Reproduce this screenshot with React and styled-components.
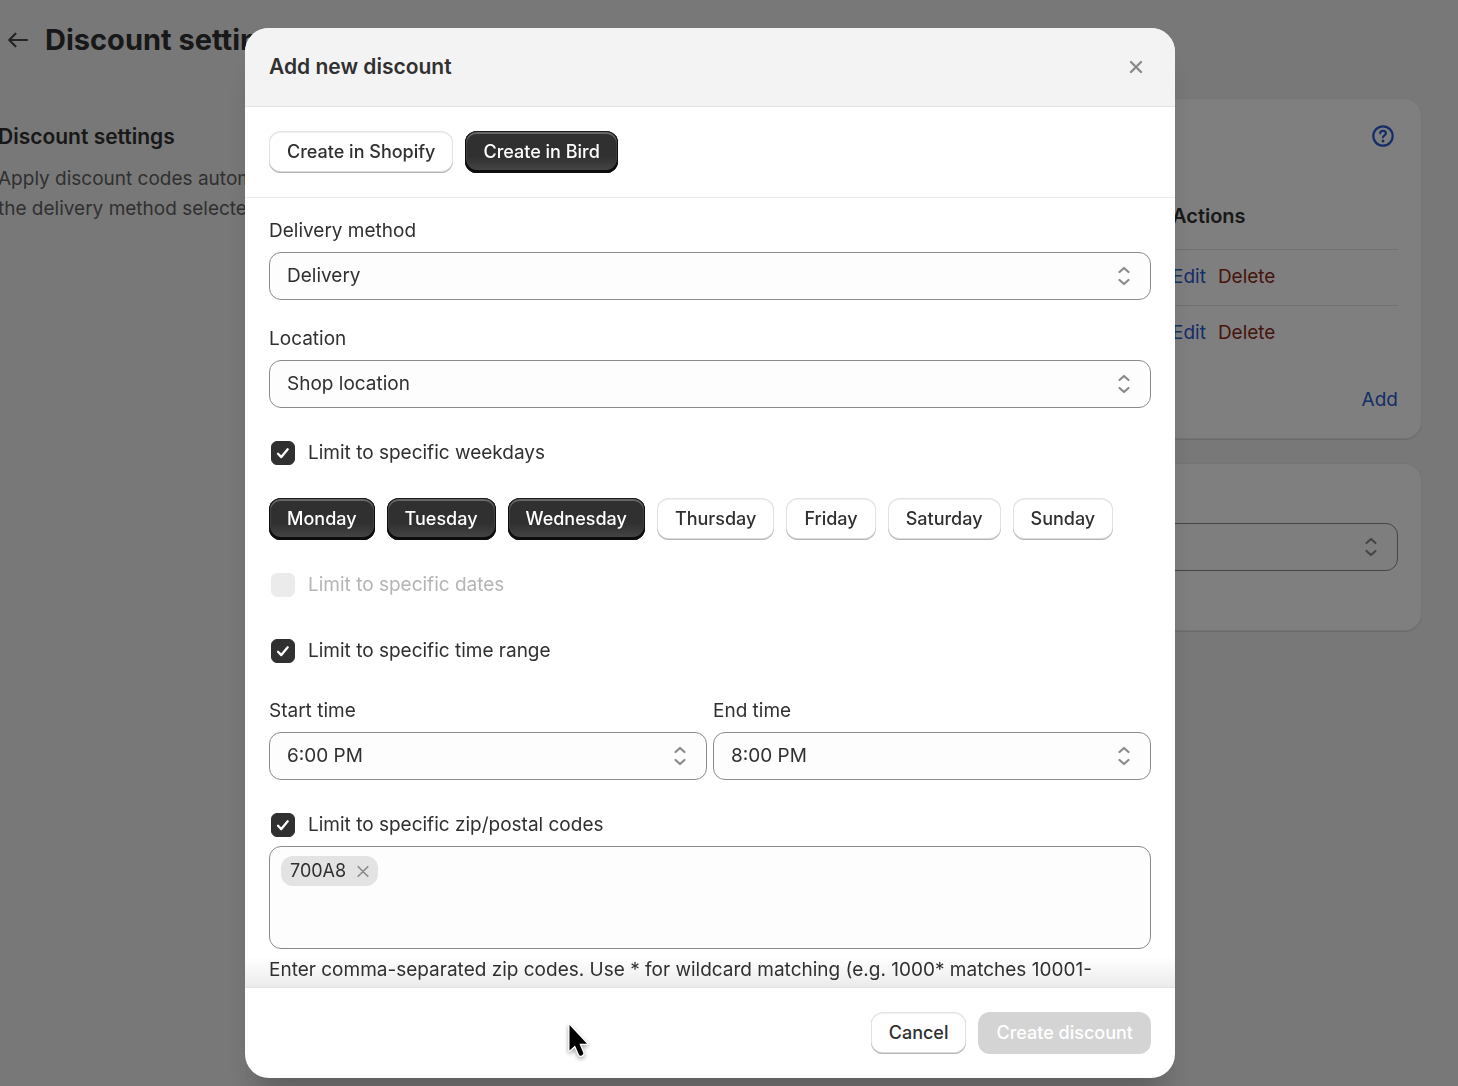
import React, { useState } from 'react';
import styled, { createGlobalStyle, css } from 'styled-components';

const GlobalStyle = createGlobalStyle`
  *,
  *::before,
  *::after {
    box-sizing: border-box;
  }

  body {
    margin: 0;
    background-color: #f1f1f1;
    color: #303030;
    font-family: Inter, 'Liberation Sans', sans-serif;
    font-size: 19px;
    line-height: 30px;
    overflow: hidden;
  }

  button,
  select,
  input {
    font: inherit;
    color: inherit;
  }
`;

/* Page behind the dialog */

const Page = styled.main`
  display: flex;
  flex-direction: column;
  gap: 34px;
  min-height: 100vh;
  margin-left: -2px;
  padding: 16px 36px 0 0;
`;

const PageHeader = styled.header`
  display: flex;
  align-items: center;
  gap: 12px;
  padding-left: 5px;
  height: 48px;
`;

const BackButton = styled.button`
  display: flex;
  padding: 0;
  border: 0;
  background: none;
`;

const PageTitle = styled.h1`
  margin: 0;
  font-size: 29px;
  line-height: 36px;
  font-weight: 700;
`;

const Columns = styled.div`
  display: grid;
  grid-template-columns: 1fr 2fr;
  gap: 24px;
`;

const Intro = styled.section`
  display: flex;
  flex-direction: column;
  gap: 12px;
  padding: 24px 36px 0 0;
`;

const IntroTitle = styled.h2`
  margin: 0;
  font-size: 21px;
  line-height: 30px;
  font-weight: 600;
`;

const IntroText = styled.p`
  margin: 0;
  color: #616161;
`;

const CardStack = styled.div`
  display: flex;
  flex-direction: column;
  gap: 24px;
`;

const Card = styled.section`
  display: flex;
  flex-direction: column;
  padding: ${({ $tall }) => ($tall ? '60px 24px' : '24px')};
  background-color: #fff;
  border-radius: 18px;
  box-shadow: 0 1px 1px rgba(26, 26, 26, 0.14), inset 0 0 0 1px rgba(0, 0, 0, 0.08);
`;

const CardTop = styled.div`
  display: flex;
  justify-content: flex-end;
  height: 61px;
`;

const HelpButton = styled.button`
  display: flex;
  align-self: flex-start;
  padding: 0;
  border: 0;
  background: none;
  color: #2a5cd0;
`;

const Table = styled.table`
  width: 100%;
  border-collapse: collapse;
  text-align: left;

  th {
    height: 66px;
    padding: 0;
    font-size: 20px;
    font-weight: 600;
  }

  td {
    height: 56px;
    padding: 0;
    border-top: 1px solid #e3e3e3;
  }

  th:last-child,
  td:last-child {
    width: 226px;
  }
`;

const ActionLinks = styled.div`
  display: flex;
  gap: 12px;
`;

const TextLink = styled.a`
  color: ${({ $critical }) => ($critical ? '#8e2a1a' : '#2a5cd0')};
  text-decoration: none;
`;

const CardFooter = styled.div`
  display: flex;
  justify-content: flex-end;
  padding-top: 24px;
`;

/* Dialog */

const Overlay = styled.div`
  position: fixed;
  inset: 0;
  display: flex;
  justify-content: center;
  align-items: flex-start;
  padding: 28px 38px 8px 0;
  background-color: rgba(0, 0, 0, 0.5);
`;

const Dialog = styled.div`
  display: flex;
  flex-direction: column;
  width: 100%;
  max-width: 930px;
  max-height: 100%;
  background-color: #fff;
  border-radius: 24px;
  box-shadow: 0 30px 30px -12px rgba(26, 26, 26, 0.28);
  overflow: hidden;
`;

const DialogHeader = styled.header`
  display: flex;
  flex: none;
  align-items: center;
  justify-content: space-between;
  padding: 24px;
  background-color: #f3f3f3;
  border-bottom: 1px solid #e3e3e3;
`;

const DialogTitle = styled.h2`
  margin: 0;
  font-size: 21px;
  line-height: 30px;
  font-weight: 600;
`;

const CloseButton = styled.button`
  display: flex;
  padding: 0;
  border: 0;
  background: none;
  color: #8a8a8a;
`;

const ModeBar = styled.div`
  display: flex;
  flex: none;
  gap: 12px;
  padding: 24px;
  border-bottom: 1px solid #ebebeb;
`;

const DialogBody = styled.form`
  display: flex;
  flex: 1;
  flex-direction: column;
  gap: 24px;
  min-height: 0;
  padding: 18px 24px;
  overflow-y: auto;
  scrollbar-width: none;
  background: linear-gradient(rgba(0, 0, 0, 0), rgba(0, 0, 0, 0.08)) bottom / 100% 30px no-repeat;

  & > * {
    flex-shrink: 0;
  }
`;

const DialogFooter = styled.footer`
  display: flex;
  flex: none;
  justify-content: flex-end;
  gap: 12px;
  padding: 24px;
  border-top: 1px solid #e3e3e3;
`;

const Button = styled.button`
  height: 42px;
  padding: 0 18px;
  border: 0;
  border-radius: 12px;
  background-color: #fff;
  font-size: 18px;
  line-height: 24px;
  font-weight: 500;
  white-space: nowrap;
  box-shadow: inset 0 -1px 0 #b5b5b5, inset 0 -2px 0 #dcdcdc, inset 0 0 0 1px #e3e3e3, inset 0 2px 0 #f0f0f0;

  ${({ $selected }) =>
    $selected &&
    css`
      background: linear-gradient(#303030 60%, #484848);
      color: #fff;
      box-shadow: inset 0 -2px 0 1px #0d0d0d, inset 0 0 0 1px #1a1a1a, inset 0 2px 0 1px #666,
        inset 0 0 0 2px #404040;
    `}

  &:disabled {
    background: #d4d4d4;
    color: #fff;
    box-shadow: none;
  }
`;

const Field = styled.div`
  display: flex;
  flex-direction: column;
  gap: 6px;
`;

const FieldRow = styled.div`
  display: grid;
  grid-template-columns: 1fr 1fr;
  gap: 6px;
`;

const SelectBox = styled.div`
  display: grid;
  align-items: center;

  & > * {
    grid-area: 1 / 1;
  }

  svg {
    justify-self: end;
    margin-right: 18px;
    color: #8a8a8a;
    pointer-events: none;
  }
`;

const NativeSelect = styled.select`
  width: 100%;
  height: 48px;
  padding: 0 48px 0 17px;
  border: 1px solid #8a8a8a;
  border-radius: 12px;
  background-color: #fdfdfd;
  appearance: none;
`;

const CheckLabel = styled.label`
  display: flex;
  align-items: center;
  gap: 13px;
  height: 42px;
  padding-left: 2px;
  color: ${({ $disabled }) => ($disabled ? '#b5b5b5' : '#303030')};
`;

const CheckBoxArea = styled.span`
  display: grid;
  color: #fff;

  & > * {
    grid-area: 1 / 1;
  }

  svg {
    pointer-events: none;
  }
`;

const CheckInput = styled.input`
  width: 24px;
  height: 24px;
  margin: 0;
  border: 1px solid #8a8a8a;
  border-radius: 6px;
  appearance: none;

  &:checked {
    border-color: #303030;
    background-color: #303030;
  }

  &:disabled {
    border-color: #ebebeb;
    background-color: #ebebeb;
  }
`;

const Weekdays = styled.div`
  display: flex;
  flex-wrap: wrap;
  gap: 12px;
`;

const ZipSection = styled.div`
  display: flex;
  flex-direction: column;
`;

const ZipBox = styled.div`
  display: flex;
  align-items: flex-start;
  gap: 6px;
  min-height: 103px;
  padding: 9px 11px;
  border: 1px solid #8a8a8a;
  border-radius: 12px;
  background-color: #fdfdfd;
`;

const ZipInput = styled.input`
  flex: 1;
  height: 30px;
  padding: 0;
  border: 0;
  outline: 0;
  background: none;
`;

const Tag = styled.span`
  display: flex;
  align-items: center;
  gap: 8px;
  height: 30px;
  padding: 0 6px 0 9px;
  border-radius: 12px;
  background-color: #e3e3e3;
  font-size: 18px;
`;

const TagRemove = styled.button`
  display: flex;
  padding: 0;
  border: 0;
  background: none;
  color: #8a8a8a;
`;

const HelpText = styled.p`
  margin: 6px 0 0;
`;

const Pointer = styled.svg`
  position: fixed;
  left: 564px;
  top: 1020px;
  pointer-events: none;
  filter: drop-shadow(0 2px 2px rgba(0, 0, 0, 0.35));
`;

const ArrowIcon = () => (
  <svg width="30" height="30" viewBox="0 0 30 30" fill="none" stroke="#4a4a4a" strokeWidth="2.2" strokeLinecap="round" strokeLinejoin="round">
    <path d="M24 15H6.500M12.500 8.700 6.200 15l6.300 6.300" />
  </svg>
);

const HelpIcon = () => (
  <svg width="30" height="30" viewBox="-4 -3 30 30" fill="none" stroke="currentColor" strokeWidth="2.200" strokeLinecap="round" strokeLinejoin="round">
    <circle cx="11" cy="11" r="9.700" />
    <path d="M8.200 8.300C8.200 6.700 9.400 5.800 11 5.800s2.900 1 2.900 2.500c0 1.900-2.900 2.200-2.900 4" />
    <circle cx="11" cy="16" r="1.500" fill="currentColor" stroke="none" />
  </svg>
);

const CloseIcon = () => (
  <svg width="30" height="30" viewBox="0 0 30 30" fill="none" stroke="currentColor" strokeWidth="2.400" strokeLinecap="round">
    <path d="m10 10 10 10M20 10 10 20" />
  </svg>
);

const SmallCloseIcon = () => (
  <svg width="18" height="18" viewBox="0 0 18 18" fill="none" stroke="currentColor" strokeWidth="1.600" strokeLinecap="round">
    <path d="m4.200 4.700 9.600 9.600M13.800 4.700l-9.600 9.600" />
  </svg>
);

const SelectIcon = () => (
  <svg width="18" height="24" viewBox="0 0 18 24" fill="none" stroke="currentColor" strokeWidth="2.200" strokeLinecap="round" strokeLinejoin="round">
    <path d="M4.500 8 9 4l4.500 4M4.500 16l4.500 4 4.500-4" />
  </svg>
);

const CheckIcon = () => (
  <svg width="24" height="24" viewBox="0 0 24 24" fill="none" stroke="currentColor" strokeWidth="2.300" strokeLinecap="round" strokeLinejoin="round">
    <path d="m7 12.800 3.300 3.300 6.400-7.800" />
  </svg>
);

const Select = ({ id, options, ...rest }) => (
  <SelectBox>
    <NativeSelect id={id} {...rest}>
      {options.map(option => (
        <option key={option}>{option}</option>
      ))}
    </NativeSelect>
    <SelectIcon />
  </SelectBox>
);

const SelectField = ({ id, label, options }) => (
  <Field>
    <label htmlFor={id}>{label}</label>
    <Select id={id} options={options} />
  </Field>
);

const Checkbox = ({ label, disabled, defaultChecked }) => {
  const [checked, setChecked] = useState(Boolean(defaultChecked));

  return (
    <CheckLabel $disabled={disabled}>
      <CheckBoxArea>
        <CheckInput
          type="checkbox"
          checked={checked}
          disabled={disabled}
          onChange={event => setChecked(event.target.checked)}
        />
        {checked && <CheckIcon />}
      </CheckBoxArea>
      {label}
    </CheckLabel>
  );
};

const weekdays = ['Monday', 'Tuesday', 'Wednesday', 'Thursday', 'Friday', 'Saturday', 'Sunday'];
const modes = ['Create in Shopify', 'Create in Bird'];

const SettingsPage = () => (
  <Page>
    <PageHeader>
      <BackButton type="button" aria-label="Back">
        <ArrowIcon />
      </BackButton>
      <PageTitle>Discount settings</PageTitle>
    </PageHeader>
    <Columns>
      <Intro>
        <IntroTitle>Discount settings</IntroTitle>
        <IntroText>Apply discount codes automatically based on the delivery method selected.</IntroText>
      </Intro>
      <CardStack>
        <Card>
          <CardTop>
            <HelpButton type="button" aria-label="Help">
              <HelpIcon />
            </HelpButton>
          </CardTop>
          <Table>
            <thead>
              <tr>
                <th />
                <th>Actions</th>
              </tr>
            </thead>
            <tbody>
              {[1, 2].map(row => (
                <tr key={row}>
                  <td />
                  <td>
                    <ActionLinks>
                      <TextLink href="#edit">Edit</TextLink>
                      <TextLink href="#delete" $critical>
                        Delete
                      </TextLink>
                    </ActionLinks>
                  </td>
                </tr>
              ))}
            </tbody>
          </Table>
          <CardFooter>
            <TextLink href="#add">Add</TextLink>
          </CardFooter>
        </Card>
        <Card $tall>
          <Select aria-label="Discount option" options={['']} />
        </Card>
      </CardStack>
    </Columns>
  </Page>
);

const DiscountDialog = () => {
  const [mode, setMode] = useState('Create in Bird');
  const [days, setDays] = useState(['Monday', 'Tuesday', 'Wednesday']);

  const toggleDay = day => {
    setDays(days.includes(day) ? days.filter(item => item !== day) : [...days, day]);
  };

  return (
    <Dialog role="dialog" aria-labelledby="dialog-title">
      <DialogHeader>
        <DialogTitle id="dialog-title">Add new discount</DialogTitle>
        <CloseButton type="button" aria-label="Close">
          <CloseIcon />
        </CloseButton>
      </DialogHeader>
      <ModeBar>
        {modes.map(name => (
          <Button key={name} type="button" $selected={mode === name} onClick={() => setMode(name)}>
            {name}
          </Button>
        ))}
      </ModeBar>
      <DialogBody>
        <SelectField id="delivery-method" label="Delivery method" options={['Delivery']} />
        <SelectField id="location" label="Location" options={['Shop location']} />
        <Checkbox label="Limit to specific weekdays" defaultChecked />
        <Weekdays>
          {weekdays.map(day => (
            <Button key={day} type="button" $selected={days.includes(day)} onClick={() => toggleDay(day)}>
              {day}
            </Button>
          ))}
        </Weekdays>
        <Checkbox label="Limit to specific dates" disabled />
        <Checkbox label="Limit to specific time range" defaultChecked />
        <FieldRow>
          <SelectField id="start-time" label="Start time" options={['6:00 PM']} />
          <SelectField id="end-time" label="End time" options={['8:00 PM']} />
        </FieldRow>
        <ZipSection>
          <Checkbox label="Limit to specific zip/postal codes" defaultChecked />
          <ZipBox>
            <Tag>
              700A8
              <TagRemove type="button" aria-label="Remove 700A8">
                <SmallCloseIcon />
              </TagRemove>
            </Tag>
            <ZipInput type="text" aria-label="Zip codes" />
          </ZipBox>
          <HelpText>
            Enter comma-separated zip codes. Use * for wildcard matching (e.g. 1000* matches 10001-10009).
          </HelpText>
        </ZipSection>
      </DialogBody>
      <DialogFooter>
        <Button type="button">Cancel</Button>
        <Button type="button" disabled>
          Create discount
        </Button>
      </DialogFooter>
    </Dialog>
  );
};

const App = () => (
  <>
    <GlobalStyle />
    <SettingsPage />
    <Overlay>
      <DiscountDialog />
    </Overlay>
    <Pointer width="30" height="44" viewBox="0 0 30 44">
      <path
        d="M5.500 5v25.500l5.500-5 4 9.300c1 2 5 .4 4.300-1.700l-3.900-9.300h7.600z"
        fill="#000"
        stroke="#fff"
        strokeWidth="2.500"
        strokeLinejoin="round"
        paintOrder="stroke"
      />
    </Pointer>
  </>
);

export default App;
